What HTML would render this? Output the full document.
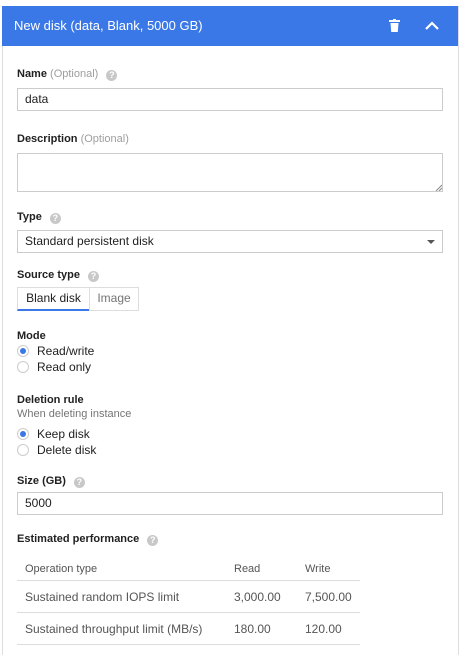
<!DOCTYPE html>
<html style="overflow:hidden;height:655px"><head><style>
body{margin:0;width:468px;height:655px;background:#fff;font-family:"Liberation Sans",sans-serif;position:relative;overflow:hidden;color:#212121}
.a{position:absolute;white-space:nowrap}
.card{position:absolute;left:2px;top:6px;width:455px;height:649px;border:1px solid #ddd;border-top:none;border-bottom:none}
.hdr{position:absolute;left:2px;top:6px;width:456px;height:40px;background:#3b78e7}
.lbl{font-size:11px;font-weight:bold;color:#212121}
.opt{font-weight:normal;color:#9e9e9e}
.q{display:inline-block;width:11px;height:11px;border-radius:50%;background:#c8c8c8;color:#fff;font-size:9px;text-align:center;line-height:11px;font-weight:bold;margin-left:8px;vertical-align:-1px}
.inp{position:absolute;left:17px;width:426px;border:1px solid #ccc;background:#fff;font-size:12px;box-sizing:border-box;padding-left:7px}
.r{position:absolute;left:17px;width:12px;height:12px;border:1px solid #ccc;border-radius:50%;box-sizing:border-box;background:#fff}
.r.on::after{content:"";position:absolute;left:2px;top:2px;width:6px;height:6px;border-radius:50%;background:#3b78e7}
.t{font-size:12px}
.line{position:absolute;left:17px;width:343px;height:1px;background:#ddd}
.c{font-size:12px;color:#555}
</style></head><body>
<div class="card"></div>
<div class="hdr"></div>
<div class="a" style="left:14px;top:18px;font-size:13px;color:#fff">New disk (data, Blank, 5000 GB)</div>
<svg class="a" style="left:389px;top:19px" width="11" height="13" viewBox="0 0 11 13"><rect x="0" y="1" width="11" height="2" fill="#fff"/><rect x="4" y="0" width="3" height="2" fill="#fff"/><path d="M1.5 4h8l-0.7 9h-6.6z" fill="#fff"/></svg>
<svg class="a" style="left:425px;top:21px" width="14" height="9" viewBox="0 0 14 9"><path d="M1 8l6-6 6 6" stroke="#fff" stroke-width="2.2" fill="none"/></svg>

<div class="a lbl" style="left:17px;top:68px">Name <span class="opt">(Optional)</span><span class="q">?</span></div>
<div class="inp" style="top:88px;height:23px;line-height:21px">data</div>

<div class="a lbl" style="left:17px;top:133px">Description <span class="opt">(Optional)</span></div>
<div class="inp" style="top:153px;height:39px"></div>
<svg class="a" style="left:435px;top:184px" width="7" height="7"><path d="M1 7L7 1M4 7L7 4" stroke="#888"/></svg>

<div class="a lbl" style="left:17px;top:211px">Type<span class="q">?</span></div>
<div class="inp" style="top:230px;height:23px;line-height:21px">Standard persistent disk</div>
<div class="a" style="left:427px;top:240px;width:0;height:0;border-left:4px solid transparent;border-right:4px solid transparent;border-top:4px solid #555"></div>

<div class="a lbl" style="left:17px;top:269px">Source type<span class="q">?</span></div>
<div class="a" style="left:17px;top:287px;width:73px;height:24px;border:1px solid #ddd;box-sizing:border-box;border-bottom:2px solid #3b78e7;font-size:12px;text-align:center;line-height:21px">Blank disk</div>
<div class="a" style="left:89px;top:287px;width:50px;height:24px;border:1px solid #ddd;box-sizing:border-box;font-size:12px;color:#757575;text-align:center;line-height:21px">Image</div>

<div class="a lbl" style="left:17px;top:330px">Mode</div>
<div class="r on" style="top:345px"></div><div class="a t" style="left:37px;top:344px">Read/write</div>
<div class="r" style="top:361px"></div><div class="a t" style="left:37px;top:360px">Read only</div>

<div class="a lbl" style="left:17px;top:394px">Deletion rule</div>
<div class="a" style="left:17px;top:408px;font-size:11px;color:#757575">When deleting instance</div>
<div class="r on" style="top:428px"></div><div class="a t" style="left:37px;top:427px">Keep disk</div>
<div class="r" style="top:444px"></div><div class="a t" style="left:37px;top:443px">Delete disk</div>

<div class="a lbl" style="left:17px;top:475px">Size (GB)<span class="q">?</span></div>
<div class="inp" style="top:492px;height:23px;line-height:21px">5000</div>

<div class="a lbl" style="left:17px;top:533px">Estimated performance<span class="q">?</span></div>
<div class="a" style="left:25px;top:563px;font-size:11px;color:#555">Operation type</div>
<div class="a" style="left:234px;top:563px;font-size:11px;color:#555">Read</div>
<div class="a" style="left:305px;top:563px;font-size:11px;color:#555">Write</div>
<div class="line" style="top:580px"></div>
<div class="a c" style="left:25px;top:590px">Sustained random IOPS limit</div>
<div class="a c" style="left:234px;top:590px">3,000.00</div>
<div class="a c" style="left:305px;top:590px">7,500.00</div>
<div class="line" style="top:612px"></div>
<div class="a c" style="left:25px;top:622px">Sustained throughput limit (MB/s)</div>
<div class="a c" style="left:234px;top:622px">180.00</div>
<div class="a c" style="left:305px;top:622px">120.00</div>
<div class="line" style="top:644px"></div>
</body></html>
